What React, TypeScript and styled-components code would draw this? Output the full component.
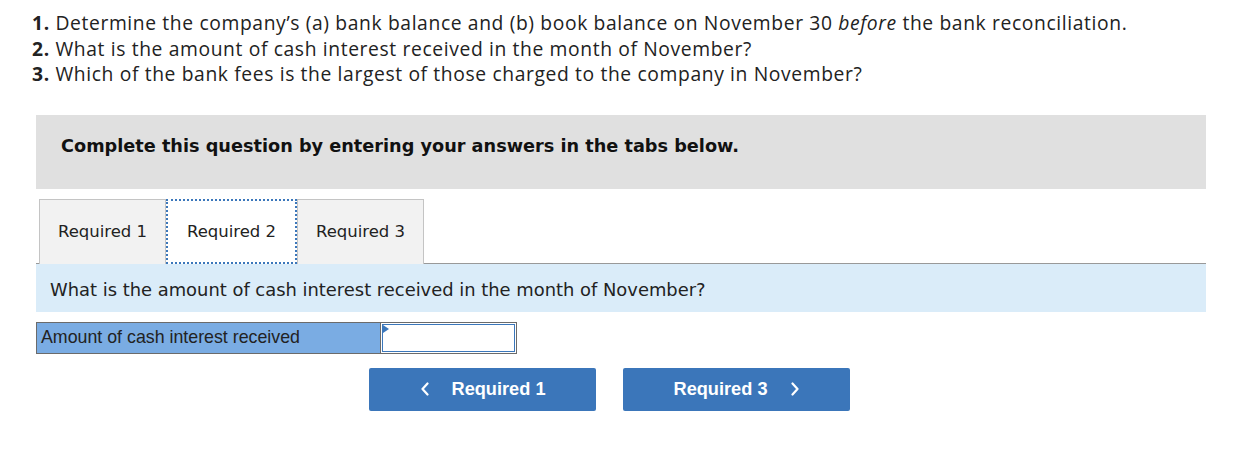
import React from "react";
import styled, { createGlobalStyle } from "styled-components";

const Global = createGlobalStyle`
  html, body { margin: 0; padding: 0; background: #ffffff; }
  body { font-family: "Open Sans", "Lato", sans-serif; color: #222; }
`;

const Page = styled.div`
  padding: 10px 0 0 32px;
  width: 1174px;
`;

const Questions = styled.ol`
  list-style: none;
  margin: 0;
  padding: 0;
  font-family: "Open Sans", "Lato", sans-serif;
  font-size: 19.3px;
  letter-spacing: 0.62px;
  line-height: 25.5px;
  color: #222;
`;

const QItem = styled.li`
  margin: 0;
  white-space: nowrap;
  b { font-weight: 700; }
`;

const Section = styled.div`
  margin: 28px 0 0 4px;
  width: 1170px;
`;

const Banner = styled.div`
  background: #e0e0e0;
  height: 74px;
  display: flex;
  align-items: center;
  padding: 0 25px 12px;
  box-sizing: border-box;
  font-family: "DejaVu Sans", Verdana, sans-serif;
  font-weight: 700;
  font-size: 17.7px;
  color: #111;
`;

const TabRow = styled.div`
  display: flex;
  margin-top: 10px;
  padding-left: 3px;
`;

const Tab = styled.div<{ $active?: boolean }>`
  height: 65px;
  box-sizing: border-box;
  display: flex;
  align-items: center;
  justify-content: center;
  font-family: "DejaVu Sans", Verdana, sans-serif;
  font-size: 16.5px;
  color: #222;
  background: ${(p) => (p.$active ? "#ffffff" : "#f2f2f2")};
  border: ${(p) => (p.$active ? "2px dotted #3b77bb" : "1px solid #c4c4c4")};
  border-bottom: ${(p) => (p.$active ? "2px dotted #3b77bb" : "none")};
  width: ${(p) => (p.$active ? "131px" : "127px")};
`;

const Prompt = styled.div`
  background: #daecf9;
  border-top: 1px solid #999;
  height: 49px;
  box-sizing: border-box;
  display: flex;
  align-items: center;
  padding: 3px 0 0 14px;
  font-family: "DejaVu Sans", Verdana, sans-serif;
  font-size: 17.9px;
  color: #222;
  margin-top: -1px;
`;

const AnswerRow = styled.div`
  display: flex;
  margin-top: 10px;
  height: 32px;
`;

const Label = styled.div`
  width: 345px;
  box-sizing: border-box;
  background: #7aace3;
  border: 1px solid #6b6b6b;
  display: flex;
  align-items: center;
  padding-left: 4px;
  font-family: "Liberation Sans", Arial, sans-serif;
  font-size: 17.8px;
  color: #222;
`;

const InputCell = styled.div`
  position: relative;
  width: 136px;
  box-sizing: border-box;
  border: 1px solid #6b6b6b;
  border-left: none;
  padding: 1px;
  background: #fff;
`;

const Input = styled.input`
  width: 100%;
  height: 100%;
  box-sizing: border-box;
  border: 1px solid #3b77bb;
  outline: none;
  margin: 0;
  padding: 0 4px;
  background: #fff;
`;

const Flag = styled.span`
  position: absolute;
  left: 2px;
  top: 2px;
  width: 0;
  height: 0;
  border-top: 4px solid transparent;
  border-bottom: 4px solid transparent;
  border-left: 6px solid #3b77bb;
`;

const NavRow = styled.div`
  display: flex;
  gap: 27px;
  margin-top: 14px;
  padding-left: 333px;
`;

const NavButton = styled.button`
  width: 227px;
  height: 43px;
  border: none;
  border-radius: 2px;
  background: #3b76ba;
  color: #fff;
  font-family: "Liberation Sans", Arial, sans-serif;
  font-weight: 700;
  font-size: 18.2px;
  display: flex;
  align-items: center;
  justify-content: center;
  gap: 22px;
  padding: 0;
  cursor: pointer;
`;

const Chevron = ({ dir }: { dir: "left" | "right" }) => (
  <svg width="10" height="14" viewBox="0 0 10 14" aria-hidden="true">
    <polyline
      points={dir === "left" ? "7.5,1.5 2.5,7 7.5,12.5" : "2.5,1.5 7.5,7 2.5,12.5"}
      fill="none"
      stroke="#ffffff"
      strokeWidth="2.2"
      strokeLinecap="round"
      strokeLinejoin="round"
    />
  </svg>
);

export default function App() {
  return (
    <>
      <Global />
      <Page>
        <Questions>
          <QItem>
            <b>1.</b> Determine the company’s (a) bank balance and (b) book balance on November 30 <i>before</i> the bank reconciliation.
          </QItem>
          <QItem>
            <b>2.</b> What is the amount of cash interest received in the month of November?
          </QItem>
          <QItem>
            <b>3.</b> Which of the bank fees is the largest of those charged to the company in November?
          </QItem>
        </Questions>
        <Section>
          <Banner>Complete this question by entering your answers in the tabs below.</Banner>
          <TabRow>
            <Tab>Required 1</Tab>
            <Tab $active>Required 2</Tab>
            <Tab>Required 3</Tab>
          </TabRow>
          <Prompt>What is the amount of cash interest received in the month of November?</Prompt>
          <AnswerRow>
            <Label>Amount of cash interest received</Label>
            <InputCell>
              <Input type="text" aria-label="Amount of cash interest received" />
              <Flag />
            </InputCell>
          </AnswerRow>
          <NavRow>
            <NavButton>
              <Chevron dir="left" />
              <span>Required 1</span>
            </NavButton>
            <NavButton>
              <span>Required 3</span>
              <Chevron dir="right" />
            </NavButton>
          </NavRow>
        </Section>
      </Page>
    </>
  );
}
